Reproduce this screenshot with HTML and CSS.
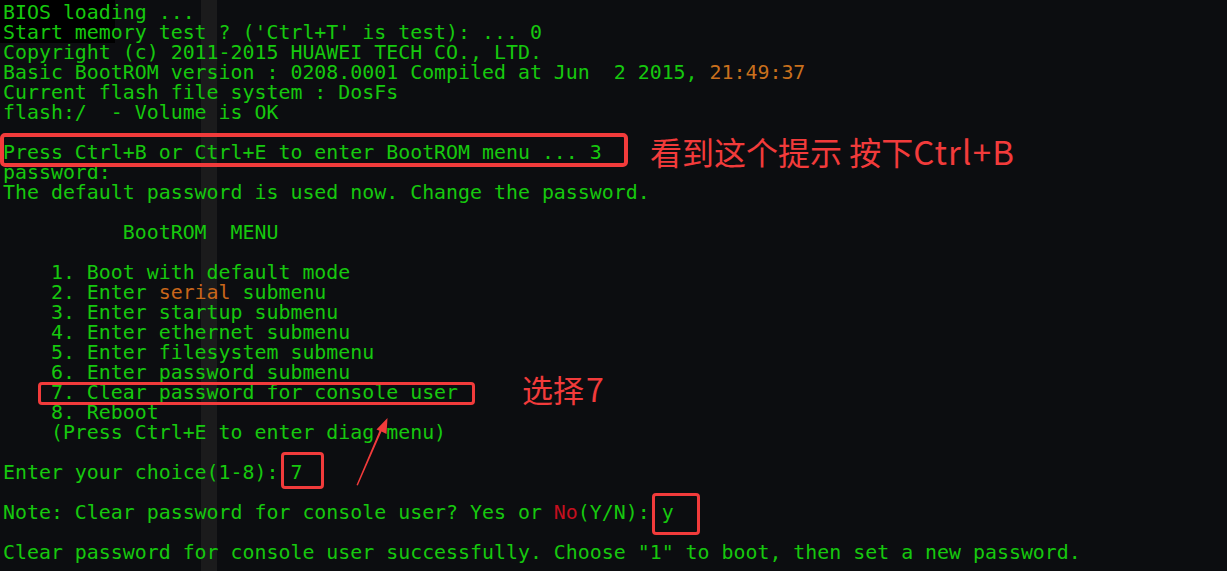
FILE: index.html
```html
<!DOCTYPE html>
<html lang="zh-CN">
<head>
<meta charset="utf-8">
<title>BootROM</title>
<link rel="stylesheet" href="styles.css">
</head>
<body>
<div class="screen">
  <div class="patch"></div>
  <div class="term">
    <div class="ln">BIOS loading ...</div>
    <div class="ln">Start memory test ? ('Ctrl+T' is test): ... 0</div>
    <div class="ln">Copyright (c) 2011-2015 HUAWEI TECH CO., LTD.</div>
    <div class="ln">Basic BootROM version : 0208.0001 Compiled at Jun  2 2015, <span class="orange">21:49:37</span></div>
    <div class="ln">Current flash file system : DosFs</div>
    <div class="ln">flash:/  - Volume is OK</div>
    <div class="ln"></div>
    <div class="ln">Press Ctrl+B or Ctrl+E to enter BootROM menu ... 3</div>
    <div class="ln">password:</div>
    <div class="ln">The default password is used now. Change the password.</div>
    <div class="ln"></div>
    <div class="ln">          BootROM  MENU</div>
    <div class="ln"></div>
    <div class="ln">    1. Boot with default mode</div>
    <div class="ln">    2. Enter <span class="orange2">serial</span> submenu</div>
    <div class="ln">    3. Enter startup submenu</div>
    <div class="ln">    4. Enter ethernet submenu</div>
    <div class="ln">    5. Enter filesystem submenu</div>
    <div class="ln">    6. Enter password submenu</div>
    <div class="ln">    7. Clear password for console user</div>
    <div class="ln">    8. Reboot</div>
    <div class="ln">    (Press Ctrl+E to enter diag menu)</div>
    <div class="ln"></div>
    <div class="ln">Enter your choice(1-8): 7</div>
    <div class="ln"></div>
    <div class="ln">Note: Clear password for console user? Yes or <span class="red">No</span>(Y/N): y</div>
    <div class="ln"></div>
    <div class="ln">Clear password for console user successfully. Choose "1" to boot, then set a new password.</div>
  </div>

  <div class="box box-press"></div>
  <div class="note note-press">看到这个提示 按下<span class="latin">Ctrl+B</span></div>
  <div class="box box-seven"></div>
  <div class="note note-seven">选择<span class="latin">7</span></div>
  <svg class="arrow" width="40" height="75" viewBox="0 0 40 75">
    <polygon points="0.5,68 1.8,68.5 25.5,14.5 30.5,17 31.5,1 20.5,12.5 23.5,13.8" fill="#f23b3b"/>
  </svg>
  <div class="box box-choice"></div>
  <div class="box box-yes"></div>
</div>
</body>
</html>
```

FILE: styles.css
```css
html, body {
  margin: 0;
  padding: 0;
  height: 100%;
}

body {
  background:
    linear-gradient(to right, transparent 201px, #1b1b1c 201px, #1b1b1c 217px, transparent 217px),
    #0c0d10;
  overflow: hidden;
}

.screen {
  position: relative;
  width: 1227px;
  height: 571px;
}

.patch {
  position: absolute;
  left: 0;
  top: 0;
  width: 115px;
  height: 43px;
  background: #000;
}

.term {
  position: relative;
  padding: 3px 0 0 3px;
  font-family: "DejaVu Sans Mono", "Liberation Mono", monospace;
  font-size: 19.9px;
  line-height: 20px;
  color: #16c80e;
}

.ln {
  height: 20px;
  white-space: pre;
}

.orange {
  color: #c9701d;
}

.orange2 {
  color: #c8661a;
}

.red {
  color: #c50f1f;
}

.box {
  position: absolute;
  border: 3px solid #f23b3b;
  border-radius: 4px;
  box-sizing: border-box;
}

.box-press {
  left: 0;
  top: 133px;
  width: 628px;
  height: 34px;
  border-width: 4px;
  border-radius: 5px;
}

.box-seven {
  left: 38px;
  top: 382px;
  width: 437px;
  height: 23px;
}

.box-choice {
  left: 281px;
  top: 452px;
  width: 43px;
  height: 37px;
}

.box-yes {
  left: 652px;
  top: 493px;
  width: 48px;
  height: 42px;
}

.note {
  position: absolute;
  font-family: "Noto Sans CJK SC", "Noto Sans", sans-serif;
  color: #f23b3b;
  line-height: 1;
  white-space: nowrap;
}

.note-press {
  left: 650px;
  top: 135px;
  font-size: 32px;
}

.note-press .latin {
  font-size: 33px;
  letter-spacing: 1.2px;
}

.note-seven {
  left: 522px;
  top: 372px;
  font-size: 31px;
}

.note-seven .latin {
  font-size: 32px;
  margin-left: 2px;
}

.arrow {
  position: absolute;
  left: 356px;
  top: 417px;
}
```
